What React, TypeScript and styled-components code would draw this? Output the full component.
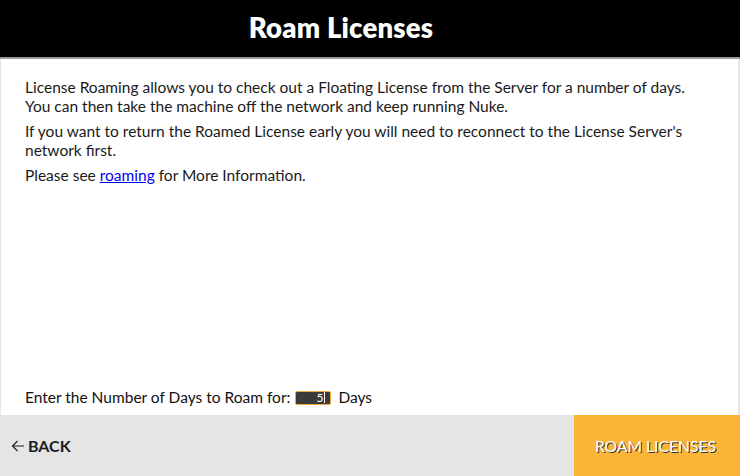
import React from "react";
import styled, { createGlobalStyle } from "styled-components";

const Global = createGlobalStyle`
  html, body { margin: 0; padding: 0; background: #ffffff; }
  body { font-family: Lato, "Noto Sans", sans-serif; }
  #root { width: 740px; height: 476px; }
`;

const Page = styled.div`
  width: 740px;
  height: 476px;
  display: flex;
  flex-direction: column;
  box-sizing: border-box;
`;

const Header = styled.div`
  height: 57px;
  background: #000;
  border-bottom: 2px solid #9a9a9a;
  display: flex;
  align-items: center;
  justify-content: center;
  padding-right: 58px;
  box-sizing: content-box;
`;

const Title = styled.h1`
  margin: 0;
  color: #fff;
  font-family: Lato, sans-serif;
  font-weight: 800;
  font-size: 27.5px;
  letter-spacing: 0.2px;
  margin-top: -2px;
`;

const Body = styled.div`
  flex: 1;
  display: flex;
  flex-direction: column;
  justify-content: space-between;
  border-left: 1px solid #e6e6e6;
  border-right: 2px solid #e6e6e6;
  padding: 19px 24px 8px 24px;
  color: #1a1a1a;
  font-size: 15.5px;
`;

const Texts = styled.div`
  display: flex;
  flex-direction: column;
  gap: 6px;
`;

const P = styled.p`
  margin: 0;
  line-height: 19px;
`;

const Link = styled.a`
  color: #0000ee;
  text-decoration: underline;
`;

const DaysRow = styled.div`
  display: flex;
  align-items: center;
  gap: 5px;
  font-size: 15.5px;
  line-height: 19px;
  color: #111;
`;

const DaysInput = styled.div`
  width: 29px;
  height: 12px;
  background: #3a3a3a;
  border: 1px solid #f5a83a;
  border-radius: 2px;
  color: #fff;
  font-size: 12px;
  line-height: 12px;
  padding-right: 5px;
  margin-right: 2px;
  display: flex;
  justify-content: flex-end;
  align-items: center;
`;

const Caret = styled.span`
  display: inline-block;
  width: 1px;
  height: 11px;
  background: #fff;
  margin-left: 1px;
`;

const Footer = styled.div`
  height: 61px;
  display: flex;
  background: #e5e5e5;
`;

const BackButton = styled.button`
  flex: 1;
  border: none;
  background: transparent;
  display: flex;
  align-items: center;
  gap: 3px;
  padding: 0 0 0 11px;
  font-family: Lato, sans-serif;
  font-weight: 700;
  font-size: 16px;
  color: #1a1a1a;
`;

const RoamButton = styled.button`
  width: 166px;
  border: none;
  background: #fbb437;
  color: #fff;
  font-family: Lato, sans-serif;
  font-size: 15.7px;
  padding: 0 3px 0 0;
  text-shadow: 1px 1px 0 #333;
`;

export default function App() {
  return (
    <>
      <Global />
      <Page>
        <Header>
          <Title>Roam Licenses</Title>
        </Header>
        <Body>
          <Texts>
            <P>
              License Roaming allows you to check out a Floating License from the Server for a number of days.
              <br />
              You can then take the machine off the network and keep running Nuke.
            </P>
            <P>
              If you want to return the Roamed License early you will need to reconnect to the License Server's
              network first.
            </P>
            <P>
              Please see <Link href="#">roaming</Link> for More Information.
            </P>
          </Texts>
          <DaysRow>
            <span>Enter the Number of Days to Roam for:</span>
            <DaysInput>
              5<Caret />
            </DaysInput>
            <span>Days</span>
          </DaysRow>
        </Body>
        <Footer>
          <BackButton>
            <svg width="14" height="12" viewBox="0 0 14 12" fill="none" stroke="#222" strokeWidth="1.2">
              <path d="M13 6H1.5M6.5 1L1.5 6l5 5" />
            </svg>
            BACK
          </BackButton>
          <RoamButton>ROAM LICENSES</RoamButton>
        </Footer>
      </Page>
    </>
  );
}
